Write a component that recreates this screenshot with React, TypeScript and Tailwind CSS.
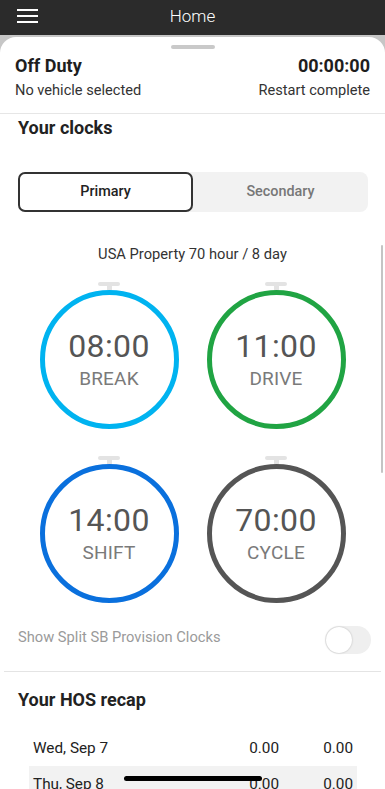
import React from "react";

function Clock({ time, label, color }: { time: string; label: string; color: string }) {
  return (
    <div className="flex flex-col items-center">
      <div className="flex flex-col items-center">
        <div className="w-[22px] h-[4px] rounded-[2px] bg-[#e3e3e3]" />
        <div className="w-[5px] h-[4px] bg-[#e3e3e3]" />
      </div>
      <div
        className="w-[139px] h-[139px] rounded-full border-[5px] flex flex-col items-center justify-center"
        style={{ borderColor: color }}
      >
        <div className="text-[32px] leading-[34px] text-[#555555] tracking-[0.4px]">{time}</div>
        <div className="text-[19px] leading-[22px] mt-[5px] text-[#7a7a7a] tracking-[0.2px]">{label}</div>
      </div>
    </div>
  );
}

export default function App() {
  return (
    <div
      className="w-[385px] h-[789px] overflow-hidden relative bg-[#c6c6c6] flex flex-col"
      style={{ fontFamily: "Roboto, 'Noto Sans', Arial, sans-serif" }}
    >
      <div className="h-[35px] shrink-0 bg-[#2b2b2b] grid grid-cols-[1fr_auto_1fr] items-center">
        <div className="pl-[17px] mb-[4px] flex items-center">
          <svg width="21" height="14" viewBox="0 0 21 14">
            <rect x="0" y="0" width="21" height="2" fill="#ffffff" />
            <rect x="0" y="6" width="21" height="2" fill="#ffffff" />
            <rect x="0" y="12" width="21" height="2" fill="#ffffff" />
          </svg>
        </div>
        <div className="mb-[3px] text-white text-[17px] leading-[20px] font-light">Home</div>
        <div />
      </div>

      <div className="mt-[2px] flex-1 bg-white rounded-t-[16px] flex flex-col">
        <div className="pt-[8px] flex justify-center">
          <div className="w-[44px] h-[4px] rounded-full bg-[#c9c9c9]" />
        </div>

        <div className="mt-[5px] px-[15px] pb-[13px] flex justify-between border-b border-[#e6e6e6]">
          <div className="flex flex-col">
            <div className="text-[18px] leading-[24px] font-bold text-[#1e1e1e]">Off Duty</div>
            <div className="mt-[2px] text-[14.6px] leading-[20px] text-[#333333]">No vehicle selected</div>
          </div>
          <div className="flex flex-col items-end">
            <div className="text-[18px] leading-[24px] font-bold text-[#1e1e1e]">00:00:00</div>
            <div className="mt-[2px] text-[14.6px] leading-[20px] text-[#333333]">Restart complete</div>
          </div>
        </div>

        <div className="mt-[2px] px-[18px] text-[18px] leading-[24px] font-bold text-[#222222]">Your clocks</div>

        <div className="mt-[32px] ml-[18px] w-[350px] h-[40px] rounded-[8px] bg-[#f2f2f2] flex">
          <div className="w-[175px] h-[40px] rounded-[7px] border-2 border-[#333333] bg-white flex items-center justify-center text-[14.4px] font-medium text-[#222222]">
            Primary
          </div>
          <div className="flex-1 flex items-center justify-center text-[14.4px] font-medium text-[#777777]">
            Secondary
          </div>
        </div>

        <div className="mt-[32px] text-center text-[14.7px] leading-[20px] text-[#333333]">
          USA Property 70 hour / 8 day
        </div>

        <div className="mt-[18px] flex flex-col gap-[27px]">
          <div className="flex justify-center gap-[28px]">
            <Clock time="08:00" label="BREAK" color="#00b3f0" />
            <Clock time="11:00" label="DRIVE" color="#20a443" />
          </div>
          <div className="flex justify-center gap-[28px]">
            <Clock time="14:00" label="SHIFT" color="#0a70dd" />
            <Clock time="70:00" label="CYCLE" color="#555555" />
          </div>
        </div>

        <div className="mt-[23px] pl-[18px] pr-[14px] flex items-center justify-between">
          <div className="mb-[6px] text-[14.7px] leading-[20px] text-[#9a9a9a]">Show Split SB Provision Clocks</div>
          <div className="w-[46px] h-[28px] rounded-full bg-[#efefef] flex items-center p-[1px]">
            <div className="w-[26px] h-[26px] rounded-full bg-white shadow-[0_0_2px_rgba(0,0,0,0.25)]" />
          </div>
        </div>

        <div className="mt-[17px] mx-[4px] border-t border-[#e4e4e4]" />

        <div className="mt-[16px] px-[18px] text-[18px] leading-[24px] font-bold text-[#222222]">Your HOS recap</div>

        <div className="mt-[18px] ml-[29px] w-[328px] flex flex-col">
          <div className="h-[36px] flex items-center pl-[4px] pr-[4px] text-[15.3px] text-[#222222]">
            <div className="flex-1">Wed, Sep 7</div>
            <div className="w-[80px] text-right">0.00</div>
            <div className="w-[74px] text-right">0.00</div>
          </div>
          <div className="h-[36px] flex items-center pl-[4px] pr-[4px] text-[15.3px] text-[#222222] bg-[#f2f2f2]">
            <div className="flex-1">Thu, Sep 8</div>
            <div className="w-[80px] text-right">0.00</div>
            <div className="w-[74px] text-right">0.00</div>
          </div>
        </div>
      </div>

      <div className="absolute left-[381px] top-[245px] w-[2px] h-[228px] rounded-full bg-[#c4c4c4]" />
      <div className="absolute left-[124px] top-[776px] w-[138px] h-[5px] rounded-full bg-black" />
    </div>
  );
}
